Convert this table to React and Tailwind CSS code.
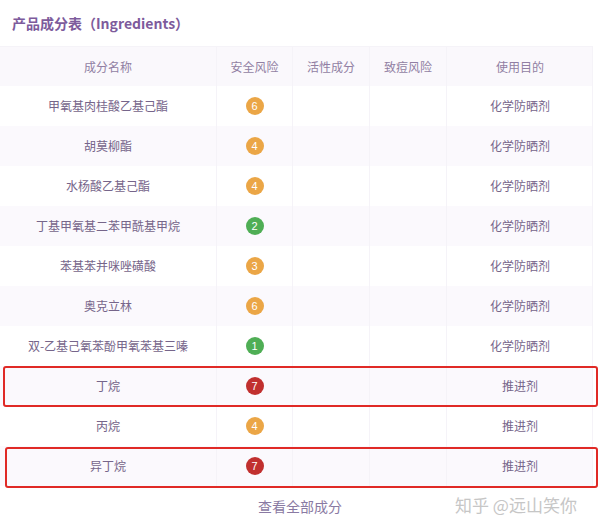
import React from 'react';

const ROWS = [
  { name: '甲氧基肉桂酸乙基己酯', risk: 6, use: '化学防晒剂' },
  { name: '胡莫柳酯', risk: 4, use: '化学防晒剂' },
  { name: '水杨酸乙基己酯', risk: 4, use: '化学防晒剂' },
  { name: '丁基甲氧基二苯甲酰基甲烷', risk: 2, use: '化学防晒剂' },
  { name: '苯基苯并咪唑磺酸', risk: 3, use: '化学防晒剂' },
  { name: '奥克立林', risk: 6, use: '化学防晒剂' },
  { name: '双-乙基己氧苯酚甲氧苯基三嗪', risk: 1, use: '化学防晒剂' },
  { name: '丁烷', risk: 7, use: '推进剂' },
  { name: '丙烷', risk: 4, use: '推进剂' },
  { name: '异丁烷', risk: 7, use: '推进剂' },
];

const riskColor = (r) => {
  if (r <= 2) return 'bg-[#4fae55]';
  if (r <= 6) return 'bg-[#eba646]';
  return 'bg-[#c1302f]';
};

const Cell = ({ children, className = '' }) => (
  <div className={`flex items-center justify-center border-r border-[#f5f3f8] ${className}`}>{children}</div>
);

const App = () => {
  return (
    <div className="relative w-[600px] h-[526px] bg-white overflow-hidden font-['Noto_Sans_CJK_SC','Noto_Sans',sans-serif]">
      {/* Title */}
      <div className="h-[46px] flex items-center pl-3">
        <h1 className="text-[14px] font-bold text-[#7d5b9c]">产品成分表（Ingredients）</h1>
      </div>

      {/* Table */}
      <div className="w-[593px] border-r border-[#f5f3f8]">
        <div className="grid grid-cols-[217px_76px_77px_77px_146px] h-10 bg-[#faf8fc] border-t border-[#f5f3f8] text-[12px] text-[#917fa3]">
          <Cell>成分名称</Cell>
          <Cell>安全风险</Cell>
          <Cell>活性成分</Cell>
          <Cell>致痘风险</Cell>
          <Cell className="border-r-0">使用目的</Cell>
        </div>
        {ROWS.map((row, i) => (
          <div
            key={row.name}
            className={`grid grid-cols-[217px_76px_77px_77px_146px] h-10 text-[12px] text-[#76658a] ${i % 2 === 1 ? 'bg-[#fbf9fd]' : 'bg-white'}`}
          >
            <Cell>{row.name}</Cell>
            <Cell>
              <span className={`w-[18px] h-[18px] rounded-full flex items-center justify-center text-white text-[11px] font-['Liberation_Sans',sans-serif] ${riskColor(row.risk)}`}>
                {row.risk}
              </span>
            </Cell>
            <Cell />
            <Cell />
            <Cell className="border-r-0">{row.use}</Cell>
          </div>
        ))}
      </div>

      {/* Highlight boxes */}
      <div className="absolute left-[3px] top-[366px] w-[595px] h-[41px] border-2 border-[#e02a26] rounded-[3px]" />
      <div className="absolute left-[5px] top-[447px] w-[593px] h-[41px] border-2 border-[#e02a26] rounded-[3px]" />

      {/* Footer */}
      <div className="h-10 flex items-center justify-center">
        <span className="text-[14px] text-[#8a7aa3]">查看全部成分</span>
      </div>

      {/* Watermark */}
      <div className="absolute left-[455px] top-[492px] text-[17px] text-[#c6c6c6]">知乎 @远山笑你</div>
    </div>
  );
};

export default App;
